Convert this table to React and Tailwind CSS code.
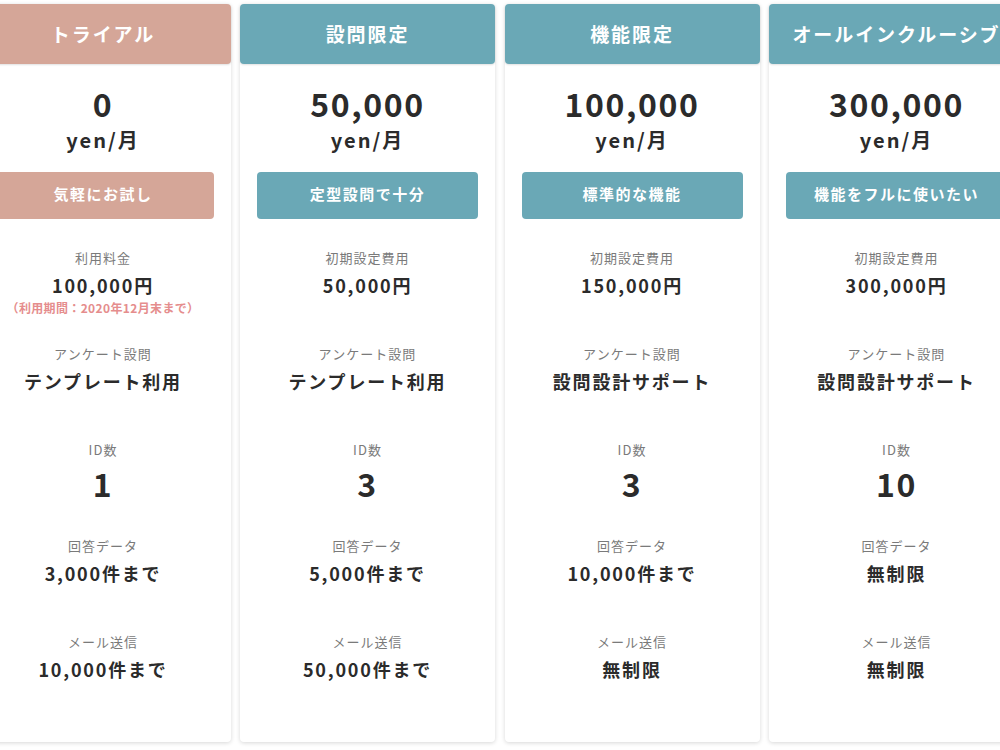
const plans = [
    {
        name: 'トライアル',
        trial: true,
        price: '0',
        catch: '気軽にお試し',
        feeLabel: '利用料金',
        fee: '100,000円',
        note: '（利用期間：2020年12月末まで）',
        survey: 'テンプレート利用',
        ids: '1',
        answers: '3,000件まで',
        mails: '10,000件まで',
    },
    {
        name: '設問限定',
        price: '50,000',
        catch: '定型設問で十分',
        feeLabel: '初期設定費用',
        fee: '50,000円',
        survey: 'テンプレート利用',
        ids: '3',
        answers: '5,000件まで',
        mails: '50,000件まで',
    },
    {
        name: '機能限定',
        price: '100,000',
        catch: '標準的な機能',
        feeLabel: '初期設定費用',
        fee: '150,000円',
        survey: '設問設計サポート',
        ids: '3',
        answers: '10,000件まで',
        mails: '無制限',
    },
    {
        name: 'オールインクルーシブ',
        price: '300,000',
        catch: '機能をフルに使いたい',
        feeLabel: '初期設定費用',
        fee: '300,000円',
        survey: '設問設計サポート',
        ids: '10',
        answers: '無制限',
        mails: '無制限',
    },
];

function Row({ label, children, note, big }) {
    return (
        <div className="h-[96px] flex flex-col items-center">
            <div className="text-[13px] leading-[20px] text-[#7a7a7a] tracking-[0.08em]">{label}</div>
            <div
                className={
                    big
                        ? 'mt-[4px] text-[32px] leading-[38px] font-bold text-[#2b2b2b] tracking-[0.05em]'
                        : 'mt-[4px] text-[18px] leading-[26px] font-bold text-[#2b2b2b] tracking-[0.1em]'
                }
            >
                {children}
            </div>
            {note && (
                <div className="mt-[2px] text-[12px] leading-[16px] font-bold text-[#e58d8d] tracking-[0.03em] whitespace-nowrap">
                    {note}
                </div>
            )}
        </div>
    );
}

function PlanCard({ plan }) {
    const color = plan.trial ? 'bg-[#d5a698]' : 'bg-[#6aa8b6]';
    return (
        <div className="w-[255px] h-[738px] shrink-0 bg-white rounded-[4px] shadow-[0_1px_4px_rgba(0,0,0,0.16)] flex flex-col">
            <div className={`${color} h-[60px] rounded-[4px] flex items-center justify-center text-white text-[19px] font-bold tracking-[0.1em] whitespace-nowrap shadow-[0_1px_2px_rgba(0,0,0,0.12)]`}>
                {plan.name}
            </div>

            <div className="pt-[21px] flex flex-col items-center text-[#2b2b2b]">
                <div className="text-[32px] leading-[36px] font-bold tracking-[0.05em]">{plan.price}</div>
                <div className="mt-[6px] text-[20px] leading-[26px] font-bold tracking-[0.1em]">yen/月</div>
            </div>

            <div className={`${color} mx-[17px] mt-[19px] h-[47px] pb-[2px] rounded-[4px] flex items-center justify-center text-white text-[15px] font-bold tracking-[0.1em] whitespace-nowrap`}>
                {plan.catch}
            </div>

            <div className="mt-[29px] flex flex-col">
                <Row label={plan.feeLabel} note={plan.note}>{plan.fee}</Row>
                <Row label="アンケート設問">{plan.survey}</Row>
                <Row label="ID数" big>{plan.ids}</Row>
                <Row label="回答データ">{plan.answers}</Row>
                <Row label="メール送信">{plan.mails}</Row>
            </div>
        </div>
    );
}

export default function App() {
    return (
        <div
            className="w-[1000px] h-[750px] overflow-hidden bg-white"
            style={{ fontFamily: '"Noto Sans CJK JP", "Noto Sans", sans-serif' }}
        >
            <div className="flex gap-[9.5px] ml-[-24.5px] pt-[4px]">
                {plans.map((p) => (
                    <PlanCard key={p.name} plan={p} />
                ))}
            </div>
        </div>
    );
}
